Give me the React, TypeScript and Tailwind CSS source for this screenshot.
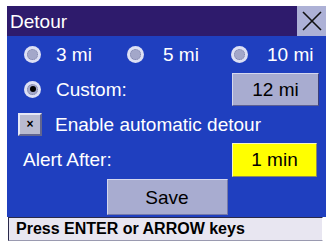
const font = { fontFamily: '"Liberation Sans", Arial, sans-serif' };

function Radio({ checked = false }: { checked?: boolean }) {
  return (
    <div className="w-[17px] h-[17px] shrink-0 rounded-full bg-[#dde0f4] flex items-center justify-center">
      <div className="w-[11px] h-[11px] rounded-full bg-[#a3a7c9] border border-dotted border-[#7c80aa] flex items-center justify-center">
        {checked && <div className="w-[6px] h-[6px] rounded-full bg-black" />}
      </div>
    </div>
  );
}

function Choice({ label, checked, gap, width }: { label: string; checked?: boolean; gap: string; width: string }) {
  return (
    <div className={`flex items-center ${width}`}>
      <Radio checked={checked} />
      <span className={gap}>{label}</span>
    </div>
  );
}

export default function App() {
  return (
    <div className="w-[332px] h-[245px] bg-white pt-[6px] pl-[7px] pr-[6px] overflow-hidden text-[19px] leading-none" style={font}>
      {/* title bar */}
      <div className="h-[30px] bg-[#2e1b6c] flex items-center justify-between">
        <span className="text-white pl-[3px]">Detour</span>
        <div className="w-[29px] h-[30px] bg-[#adb1d6] flex items-center justify-center">
          <svg width="22" height="22" viewBox="0 0 22 22">
            <path d="M2 2 L20 20 M20 2 L2 20" stroke="#111" strokeWidth="1.6" fill="none" />
          </svg>
        </div>
      </div>

      {/* body */}
      <div className="h-[181px] bg-[#1f3fbf] text-white flex flex-col">
        <div className="h-[36px] flex items-center pl-[17px]">
          <Choice label="3 mi" gap="ml-[15px]" width="w-[103px]" />
          <Choice label="5 mi" gap="ml-[19px]" width="w-[104px]" />
          <Choice label="10 mi" gap="ml-[19px]" width="w-[90px]" />
        </div>

        <div className="h-[34px] flex items-center justify-between pl-[17px] pr-[7px]">
          <Choice label="Custom:" checked gap="ml-[15px]" width="" />
          <div className="w-[87px] h-[33px] bg-[#a8acd0] border border-t-[#d4d7ef] border-l-[#d4d7ef] border-b-[#5b5f93] border-r-[#3b3f7a] text-black flex items-center justify-center">
            12 mi
          </div>
        </div>

        <div className="h-[36px] flex items-center pl-[11px]">
          <div className="w-[24px] h-[23px] bg-[#b9bbd0] border-2 border-t-[#e6e8f6] border-l-[#e6e8f6] border-b-[#62668f] border-r-[#62668f] flex items-center justify-center">
            <span className="text-black text-[12px] font-bold leading-none">×</span>
          </div>
          <span className="ml-[13px]">Enable automatic detour</span>
        </div>

        <div className="h-[35px] flex items-center justify-between pl-[16px] pr-[9px]">
          <span>Alert After:</span>
          <div className="w-[85px] h-[34px] bg-[#ffff00] border border-t-[#f4f4c8] border-l-[#f4f4c8] border-b-[#8c8c60] border-r-[#8c8c60] text-black flex items-center justify-center">
            1 min
          </div>
        </div>

        <div className="mt-[2px] h-[36px] flex justify-center">
          <div className="ml-[1px] w-[121px] h-[36px] bg-[#a8acd0] border border-t-[#d4d7ef] border-l-[#d4d7ef] border-b-[#7478a8] border-r-[#7478a8] text-black flex items-center justify-center">
            Save
          </div>
        </div>
      </div>

      {/* status bar */}
      <div className="ml-[1px] mr-[3px] h-[24px] bg-[#e8e6f1] border border-t-[#2a2a4a] border-l-[#2a2a4a] border-b-[#9a9ab0] border-r-[#ffffff] flex items-center pl-[7px]">
        <span className="text-black text-[16px] font-bold">Press ENTER or ARROW keys</span>
      </div>
    </div>
  );
}
